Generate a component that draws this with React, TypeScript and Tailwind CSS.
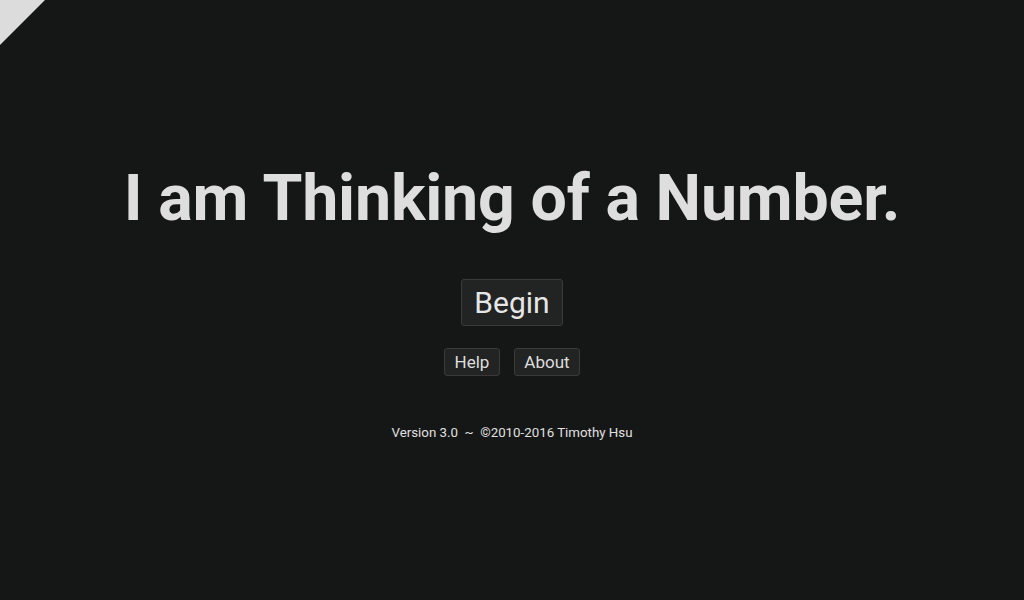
import React from 'react';

const App = () => {
  return (
    <div className="relative min-h-[600px] w-full bg-[#151616] text-[#dedede] font-['Roboto',sans-serif] overflow-hidden">
      <svg className="absolute left-0 top-0" width="46" height="46" viewBox="0 0 46 46">
        <polygon points="0,0 45,0 0,45" fill="#dcdcdc" />
      </svg>
      <div className="flex flex-col items-center pt-[155px]">
        <h1 className="text-[64.5px] leading-[86px] font-bold tracking-[-0.2px]">I am Thinking of a Number.</h1>
        <button className="mt-[38px] h-[47px] px-[12px] rounded-[3px] border border-[#3a3a3a] bg-[#222323] text-[30px] leading-none text-[#e6e6e6]">
          Begin
        </button>
        <div className="mt-[22px] flex gap-[14px]">
          <button className="h-[28px] w-[56px] rounded-[3px] border border-[#3a3a3a] bg-[#222323] text-[17px] leading-none">Help</button>
          <button className="h-[28px] w-[66px] rounded-[3px] border border-[#3a3a3a] bg-[#222323] text-[17px] leading-none">About</button>
        </div>
        <p className="mt-[47px] text-[13.3px] text-[#e0e0e0] whitespace-pre">Version 3.0  ~  ©2010-2016 Timothy Hsu</p>
      </div>
    </div>
  );
};

export default App;
